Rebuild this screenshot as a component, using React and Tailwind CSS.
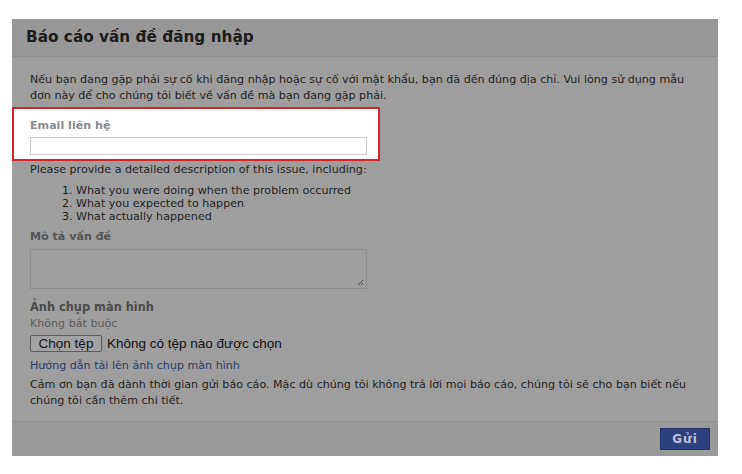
import React from "react";

const App = () => {
  return (
    <div className="w-[742px] h-[474px] bg-white pt-[19px] pl-[12px]" style={{ fontFamily: '"DejaVu Sans", Verdana, sans-serif' }}>
      <div className="w-[706px] flex flex-col">
        <div className="h-[38px] bg-[#979797] flex items-center pl-[14px] border-b border-[#8f8f8f]">
          <h1 className="text-[15.3px] font-bold text-[#1c1c1c]">Báo cáo vấn đề đăng nhập</h1>
        </div>

        <div className="bg-[#9e9e9e] pt-[15px] pb-[12px] text-[11.1px] leading-[16px] text-[#1e1e1e]">
          <p className="px-[18px]">
            Nếu bạn đang gặp phải sự cố khi đăng nhập hoặc sự cố với mật khẩu, bạn đã đến đúng địa chỉ. Vui lòng sử dụng mẫu đơn này để cho chúng tôi biết về vấn đề mà bạn đang gặp phải.
          </p>

          <div className="mt-[3px] w-[368px] h-[54px] bg-white border-2 border-[#d3252d] pl-[16px] pt-[9px]">
            <label className="block font-bold text-[#8a8a8a] leading-[16px]">Email liên hệ</label>
            <input type="text" className="mt-[3px] w-[337px] h-[18px] border border-[#c9c9c9] bg-white outline-none" />
          </div>

          <div className="px-[18px]">
            <p className="mt-[1px]">Please provide a detailed description of this issue, including:</p>
            <ol className="mt-[6px] pl-[32px] leading-[13px]">
              <li>1. What you were doing when the problem occurred</li>
              <li>2. What you expected to happen</li>
              <li>3. What actually happened</li>
            </ol>

            <p className="mt-[6px] font-bold text-[#555555]">Mô tả vấn đề</p>
            <div className="mt-[4px] relative w-[337px] h-[40px] border border-[#8c8c8c] bg-[#9e9e9e]">
              <svg className="absolute right-[2px] bottom-[2px]" width="7" height="7" viewBox="0 0 7 7">
                <path d="M6 1 L1 6 M6 4 L4 6" stroke="#4a4a4a" strokeWidth="1" />
              </svg>
            </div>

            <p className="mt-[10px] font-bold text-[#4a4a4a] text-[11.4px]">Ảnh chụp màn hình</p>
            <p className="mt-[1px] text-[#5c5c5c]">Không bắt buộc</p>
            <div className="mt-[3px] flex items-center gap-[5px]" style={{ fontFamily: '"Liberation Sans", Arial, sans-serif' }}>
              <button className="h-[17px] w-[72px] border border-[#5a5a5a] bg-[#a3a3a3] rounded-[2px] text-[13.5px] text-[#111] leading-none">Chọn tệp</button>
              <span className="text-[13.5px] text-[#111]">Không có tệp nào được chọn</span>
            </div>

            <p className="mt-[6px] text-[#2b3a67]">Hướng dẫn tải lên ảnh chụp màn hình</p>
            <p className="mt-[3px]">
              Cảm ơn bạn đã dành thời gian gửi báo cáo. Mặc dù chúng tôi không trả lời mọi báo cáo, chúng tôi sẽ cho bạn biết nếu chúng tôi cần thêm chi tiết.
            </p>
          </div>
        </div>

        <div className="h-[35px] bg-[#9a9a9a] border-t border-[#909090] flex items-center justify-end pr-[8px]">
          <button className="h-[22px] w-[50px] bg-[#2c3f7e] border border-[#24346a] text-[12px] font-bold tracking-[1px] text-[#b9c2dc]">Gửi</button>
        </div>
      </div>
    </div>
  );
};

export default App;
